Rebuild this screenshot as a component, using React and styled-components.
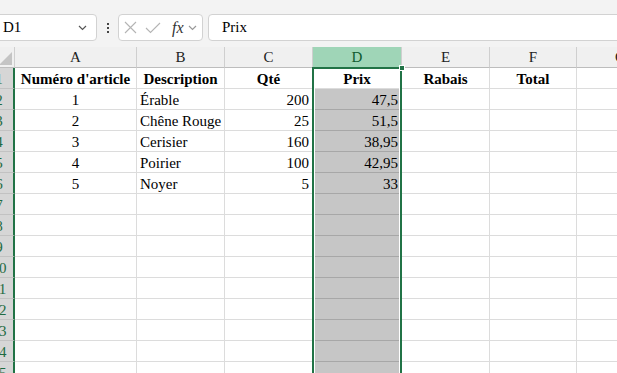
import React from "react";
import styled, { createGlobalStyle, css } from "styled-components";

const GlobalStyle = createGlobalStyle`
  html, body {
    margin: 0;
    padding: 0;
    background: #f3f3f3;
  }
  * {
    box-sizing: border-box;
  }
`;

const green = "#217346";
const serif = `"Liberation Serif", "Times New Roman", serif`;

const Page = styled.div`
  width: 617px;
  height: 373px;
  overflow: hidden;
  background: #f3f3f3;
  font-family: ${serif};
  color: #000;
`;

const FormulaBar = styled.div`
  display: flex;
  align-items: stretch;
  height: 27px;
  margin-top: 14px;
`;

const NameBox = styled.div`
  width: 101px;
  margin-left: -4px;
  display: flex;
  align-items: center;
  justify-content: space-between;
  padding: 0 9px 0 6px;
  background: #fff;
  border: 1px solid #d2d2d2;
  border-radius: 4px;
  font-size: 15px;
`;

const Kebab = styled.div`
  width: 21px;
  display: flex;
  flex-direction: column;
  align-items: center;
  justify-content: center;
  gap: 2px;
  span {
    width: 2px;
    height: 2px;
    background: #444;
  }
`;

const FxBox = styled.div`
  width: 85px;
  display: flex;
  align-items: center;
  padding: 0 4px 0 5px;
  gap: 8px;
  background: #fff;
  border: 1px solid #d2d2d2;
  border-radius: 4px;
`;

const Fx = styled.span`
  font-family: ${serif};
  font-style: italic;
  font-size: 16px;
  color: #333;
  margin-left: 3px;
  margin-right: -4px;
`;

const FormulaInput = styled.div`
  flex: 1;
  margin-left: 5px;
  margin-right: -10px;
  display: flex;
  align-items: center;
  padding-left: 13px;
  background: #fff;
  border: 1px solid #d2d2d2;
  border-radius: 4px;
  font-size: 15px;
`;

const SheetWrap = styled.div`
  position: relative;
  margin-top: 6px;
  margin-left: -13px;
`;

const Grid = styled.div`
  display: grid;
  grid-template-columns: 28px 122px 88px 88px 89px 88px 87px 88px;
  grid-auto-rows: 21px;
  background: #fff;
`;

const ColHead = styled.div`
  display: flex;
  align-items: center;
  justify-content: center;
  background: ${(p) => (p.$active ? "#9fd5b7" : "#f0f0f0")};
  color: ${(p) => (p.$active ? "#0e5a30" : "#222")};
  border-right: 1px solid #cfcfcf;
  border-bottom: 1px solid #bdbdbd;
  font-size: 15px;
`;

const Corner = styled.div`
  position: relative;
  background: #f0f0f0;
  border-right: 1px solid #cfcfcf;
  border-bottom: 1px solid #bdbdbd;
  &::after {
    content: "";
    position: absolute;
    right: 2px;
    bottom: 2px;
    border-left: 13px solid transparent;
    border-bottom: 13px solid #c4c4c4;
  }
`;

const RowHead = styled.div`
  display: flex;
  align-items: flex-end;
  justify-content: center;
  line-height: 17px;
  background: #d6d6d6;
  color: #1e6b42;
  border-right: 2px solid ${green};
  border-bottom: 1px solid #c2c2c2;
  font-size: 15px;
  padding-right: 2px;
`;

const Cell = styled.div`
  display: flex;
  align-items: flex-end;
  line-height: 17px;
  overflow: visible;
  white-space: nowrap;
  font-size: 15px;
  border-right: 1px solid #dcdcdc;
  border-bottom: 1px solid #dcdcdc;
  padding: 0 3px;
  justify-content: ${(p) =>
    p.$align === "right" ? "flex-end" : p.$align === "center" ? "center" : "flex-start"};
  ${(p) => p.$bold && css`font-weight: bold;`}
  ${(p) =>
    p.$selected &&
    css`
      background: #c6c6c6;
      border-bottom-color: #a7a7a7;
      border-right-color: #c6c6c6;
    `}
`;

const Selection = styled.div`
  position: absolute;
  left: 325px;
  top: 20px;
  width: 90px;
  height: 340px;
  border: 2px solid ${green};
  box-shadow: inset 0 0 0 1px #fff;
  pointer-events: none;
`;

const Handle = styled.div`
  position: absolute;
  right: -5px;
  top: -4px;
  width: 6px;
  height: 6px;
  background: ${green};
  border: 1px solid #fff;
`;

const Chevron = ({ color = "#555" }) => (
  <svg width="9" height="6" viewBox="0 0 9 6">
    <path d="M1 1l3.5 3.5L8 1" fill="none" stroke={color} strokeWidth="1.2" />
  </svg>
);

const Cross = () => (
  <svg width="13" height="13" viewBox="0 0 13 13">
    <path d="M1 1l11 11M12 1L1 12" stroke="#b4b4b4" strokeWidth="1.1" fill="none" />
  </svg>
);

const Check = () => (
  <svg width="16" height="12" viewBox="0 0 16 12">
    <path d="M1 6l4.5 4.5L15 1" stroke="#b4b4b4" strokeWidth="1.1" fill="none" />
  </svg>
);

const columns = ["A", "B", "C", "D", "E", "F", "G"];
const header = ["Numéro d'article", "Description", "Qté", "Prix", "Rabais", "Total", ""];
const items = [
  [1, "Érable", 200, "47,5"],
  [2, "Chêne Rouge", 25, "51,5"],
  [3, "Cerisier", 160, "38,95"],
  [4, "Poirier", 100, "42,95"],
  [5, "Noyer", 5, "33"],
];
const ROWS = 15;

export default function App() {
  const rows = [];
  for (let r = 1; r <= ROWS; r++) {
    const cells = [<RowHead key={`h${r}`}>{r}</RowHead>];
    if (r === 1) {
      header.forEach((text, i) =>
        cells.push(
          <Cell key={i} $bold $align="center">
            {text}
          </Cell>
        )
      );
    } else {
      const item = items[r - 2] || [];
      const aligns = ["center", "left", "right", "right", "left", "left", "left"];
      for (let c = 0; c < 7; c++) {
        cells.push(
          <Cell key={c} $align={aligns[c]} $selected={c === 3}>
            {item[c] ?? ""}
          </Cell>
        );
      }
    }
    rows.push(cells);
  }

  return (
    <Page>
      <GlobalStyle />
      <FormulaBar>
        <NameBox>
          D1
          <Chevron />
        </NameBox>
        <Kebab>
          <span />
          <span />
          <span />
        </Kebab>
        <FxBox>
          <Cross />
          <Check />
          <Fx>fx</Fx>
          <Chevron color="#999" />
        </FxBox>
        <FormulaInput>Prix</FormulaInput>
      </FormulaBar>
      <SheetWrap>
        <Grid>
          <Corner />
          {columns.map((c) => (
            <ColHead key={c} $active={c === "D"}>
              {c}
            </ColHead>
          ))}
          {rows}
        </Grid>
        <Selection>
          <Handle />
        </Selection>
      </SheetWrap>
    </Page>
  );
}
